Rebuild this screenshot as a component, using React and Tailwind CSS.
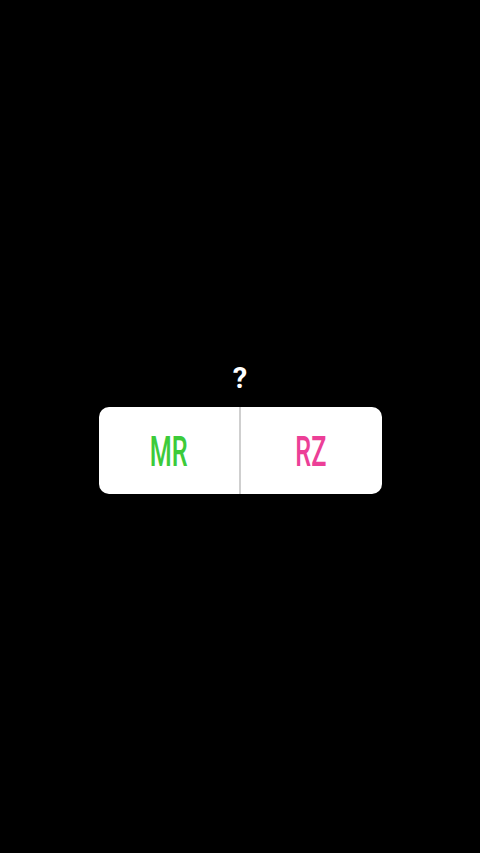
import React from 'react';

const options = [
  { label: 'MR', color: 'text-[#3ccb3a]' },
  { label: 'RZ', color: 'text-[#ec3f97]' },
];

const App = () => {
  return (
    <div className="w-[480px] h-[853px] bg-black flex flex-col items-center pt-[364px] font-['Roboto','Liberation_Sans',sans-serif]">
      <div className="text-white font-bold text-[29px] leading-[28px] mb-[15px]">?</div>
      <div className="w-[283px] h-[87px] bg-white rounded-[10px] flex overflow-hidden">
        {options.map((opt, i) => (
          <React.Fragment key={opt.label}>
            {i > 0 && <div className="w-[2px] bg-[#cfcfcf]" />}
            <div className="flex-1 flex items-center justify-center pt-[3px]">
              <span className={`text-[42px] leading-none font-medium scale-x-[0.6] ${opt.color}`}>{opt.label}</span>
            </div>
          </React.Fragment>
        ))}
      </div>
    </div>
  );
};

export default App;
